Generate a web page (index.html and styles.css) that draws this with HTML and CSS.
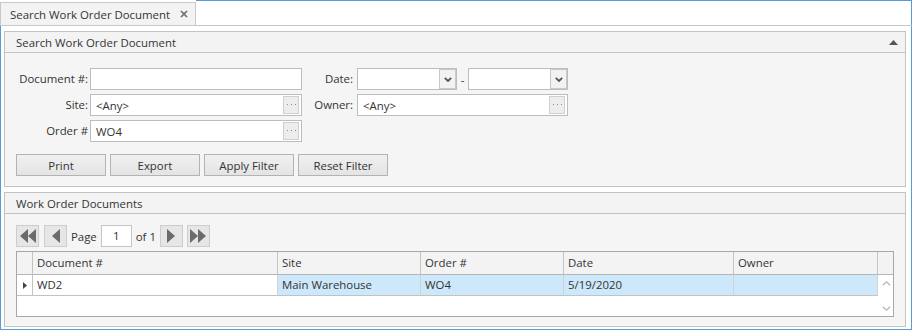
FILE: index.html
```html
<!DOCTYPE html>
<html lang="en">
<head>
  <meta charset="UTF-8">
  <title>Search Work Order Document</title>
  <link rel="stylesheet" href="styles.css">
</head>
<body>

  <div class="window">
    <div class="tabstrip">
      <div class="tab">
        <span>Search Work Order Document</span>
        <svg class="tab-close" width="8" height="8" viewBox="0 0 8 8"><path d="M1 1L7 7M7 1L1 7" stroke="#6a6a6a" stroke-width="1.6"/></svg>
      </div>
      <div class="tab-fill"></div>
    </div>

    <div class="content">

      <!-- Filter group -->
      <section class="group group-filter">
        <header class="group-head">
          <span>Search Work Order Document</span>
          <svg class="collapse" width="9" height="5" viewBox="0 0 9 5"><path d="M4.5 0L9 5H0Z" fill="#555"/></svg>
        </header>
        <div class="group-body">
          <div class="filter-grid">
            <label class="lbl">Document #:</label>
            <div class="field"></div>
            <label class="lbl lbl-right">Date:</label>
            <div class="date-range">
              <div class="field combo">
                <span class="combo-btn"><svg width="8" height="5" viewBox="0 0 8 5"><path d="M0.8 0.8L4 4L7.2 0.8" stroke="#555" stroke-width="1.8" fill="none"/></svg></span>
              </div>
              <span class="dash">-</span>
              <div class="field combo">
                <span class="combo-btn"><svg width="8" height="5" viewBox="0 0 8 5"><path d="M0.8 0.8L4 4L7.2 0.8" stroke="#555" stroke-width="1.8" fill="none"/></svg></span>
              </div>
            </div>

            <label class="lbl">Site:</label>
            <div class="field">
              <span class="field-text">&lt;Any&gt;</span>
              <span class="dots-btn"><svg width="9" height="2" viewBox="0 0 9 2"><path d="M0 0h1v1H0zM4 0h1v1H4zM8 0h1v1H8z" fill="#8a8a8a"/></svg></span>
            </div>
            <label class="lbl lbl-right">Owner:</label>
            <div class="field">
              <span class="field-text">&lt;Any&gt;</span>
              <span class="dots-btn"><svg width="9" height="2" viewBox="0 0 9 2"><path d="M0 0h1v1H0zM4 0h1v1H4zM8 0h1v1H8z" fill="#8a8a8a"/></svg></span>
            </div>

            <label class="lbl">Order #</label>
            <div class="field">
              <span class="field-text">WO4</span>
              <span class="dots-btn"><svg width="9" height="2" viewBox="0 0 9 2"><path d="M0 0h1v1H0zM4 0h1v1H4zM8 0h1v1H8z" fill="#8a8a8a"/></svg></span>
            </div>
          </div>

          <div class="actions">
            <button class="btn">Print</button>
            <button class="btn">Export</button>
            <button class="btn">Apply Filter</button>
            <button class="btn">Reset Filter</button>
          </div>
        </div>
      </section>

      <!-- Results group -->
      <section class="group group-results">
        <header class="group-head">
          <span>Work Order Documents</span>
        </header>
        <div class="group-body">
          <div class="pager">
            <span class="pg-btn"><svg width="16" height="14" viewBox="0 0 16 14"><path d="M8 0V14L0 7ZM16 0V14L8 7Z" fill="#6b6b6b"/></svg></span>
            <span class="pg-btn"><svg width="8" height="14" viewBox="0 0 8 14"><path d="M8 0V14L0 7Z" fill="#6b6b6b"/></svg></span>
            <span class="pg-text">Page</span>
            <span class="pg-input">1</span>
            <span class="pg-text">of 1</span>
            <span class="pg-btn"><svg width="8" height="14" viewBox="0 0 8 14"><path d="M0 0V14L8 7Z" fill="#6b6b6b"/></svg></span>
            <span class="pg-btn"><svg width="16" height="14" viewBox="0 0 16 14"><path d="M0 0V14L8 7ZM8 0V14L16 7Z" fill="#6b6b6b"/></svg></span>
          </div>

          <div class="grid">
            <div class="gh"></div>
            <div class="gh">Document #</div>
            <div class="gh">Site</div>
            <div class="gh">Order #</div>
            <div class="gh">Date</div>
            <div class="gh">Owner</div>
            <div class="gh gh-last"></div>

            <div class="gc indicator"><svg width="4" height="7" viewBox="0 0 4 7"><path d="M0 0L4 3.5L0 7Z" fill="#444"/></svg></div>
            <div class="gc focused">WD2</div>
            <div class="gc sel">Main Warehouse</div>
            <div class="gc sel">WO4</div>
            <div class="gc sel">5/19/2020</div>
            <div class="gc sel"></div>
            <div class="vscroll">
              <svg width="9" height="5" viewBox="0 0 9 5"><path d="M0.8 4.2L4.5 0.8L8.2 4.2" stroke="#b8b8b8" stroke-width="1.3" fill="none"/></svg>
              <svg width="9" height="5" viewBox="0 0 9 5"><path d="M0.8 0.8L4.5 4.2L8.2 0.8" stroke="#b8b8b8" stroke-width="1.3" fill="none"/></svg>
            </div>
            <div class="gempty"></div>
          </div>
        </div>
      </section>

    </div>
  </div>

</body>
</html>
```

FILE: styles.css
```css
* {
  box-sizing: border-box;
}

body {
  margin: 0;
  font-family: "Segoe UI", "Open Sans", "Noto Sans", sans-serif;
  font-size: 11.4px;
  color: #333;
  background: #fff;
  white-space: nowrap;
}

.window {
  width: 912px;
  height: 330px;
}

/* tab strip */
.tabstrip {
  display: flex;
  height: 26px;
  border-bottom: 1px solid #c6c6c6;
}

.tab {
  margin-top: 2px;
  width: 196px;
  height: 23px;
  display: flex;
  align-items: center;
  padding-left: 9px;
  background: #f3f3f3;
  border: 1px solid #c8c8c8;
  border-bottom: none;
  color: #333;
}

.tab-close {
  margin-left: 10px;
}

.tab-fill {
  flex: 1;
  border-top: 1px solid #5b9bd5;
  border-right: 1px solid #5b9bd5;
}

.content {
  height: 304px;
  border: 1px solid #5b9bd5;
  border-top: none;
  padding: 5px 5px 2px 3px;
  display: flex;
  flex-direction: column;
  gap: 5px;
  background: #fff;
}

/* group boxes */
.group {
  border: 1px solid #c3c3c3;
  background: #f5f5f5;
}

.group-filter {
  height: 156px;
}

.group-results {
  height: 135px;
}

.group-head {
  height: 21px;
  display: flex;
  align-items: center;
  justify-content: space-between;
  padding: 0 7px 0 11px;
  background: #f3f3f3;
  border-bottom: 1px solid #c3c3c3;
  color: #333;
}

.group-filter .group-body {
  padding: 15px 0 0 11px;
}

.group-results .group-body {
  padding: 11px 0 0 11px;
}

.filter-grid {
  display: grid;
  grid-template-columns: 74px 212px 55px 211px;
  grid-auto-rows: 22px;
  row-gap: 4px;
}

.lbl {
  text-align: right;
  padding-right: 2px;
  line-height: 21px;
  color: #333;
}

.lbl-right {
  padding-right: 4px;
}

.field {
  position: relative;
  height: 22px;
  background: #fff;
  border: 1px solid #bdbdbd;
  display: flex;
  align-items: center;
}

.field-text {
  padding-left: 5px;
  color: #333;
}

.dots-btn {
  position: absolute;
  right: 2px;
  top: 1px;
  width: 16px;
  height: 18px;
  background: #ededed;
  border: 1px solid #cfcfcf;
  display: flex;
  align-items: center;
  justify-content: center;
}

.date-range {
  display: flex;
  align-items: center;
}

.combo {
  width: 100px;
}

.combo-btn {
  position: absolute;
  right: 0;
  top: 0;
  width: 17px;
  height: 20px;
  background: #f2f2f2;
  border: 1px solid #c9c9c9;
  display: flex;
  align-items: center;
  justify-content: center;
}

.dash {
  width: 11px;
  text-align: center;
}

.actions {
  display: flex;
  gap: 4px;
  margin-top: 12px;
}

.btn {
  width: 90px;
  height: 22px;
  padding: 0;
  font: inherit;
  color: #333;
  background: linear-gradient(#f0f0f0, #e4e4e4);
  border: 1px solid #b3b3b3;
}

/* pager */
.pager {
  display: flex;
  align-items: center;
  height: 22px;
}

.pg-btn {
  width: 23px;
  height: 22px;
  margin-right: 5px;
  background: #e6e6e6;
  border: 1px solid #cdcdcd;
  display: flex;
  align-items: center;
  justify-content: center;
}

.pg-btn:nth-child(4n+2) {
  margin-right: 4px;
}

.pg-text {
  margin-right: 4px;
}

.pg-input {
  width: 31px;
  height: 22px;
  margin-right: 4px;
  background: #fff;
  border: 1px solid #c6c6c6;
  text-align: center;
  line-height: 20px;
}

/* data grid */
.grid {
  margin-top: 4px;
  width: 878px;
  display: grid;
  grid-template-columns: 16px 245px 143px 143px 170px 144px 15px;
  grid-template-rows: 23px 21px 20px;
  border: 1px solid #a8a8a8;
  background: #fff;
}

.gh {
  background: #f3f3f3;
  border-right: 1px solid #c3c3c3;
  border-bottom: 1px solid #b5b5b5;
  padding-left: 4px;
  line-height: 22px;
}

.gh-last {
  border-right: none;
}

.gc {
  border-right: 1px solid #d2d2d2;
  border-bottom: 1px solid #c3c3c3;
  padding-left: 4px;
  line-height: 20px;
}

.indicator {
  display: flex;
  align-items: center;
  padding-left: 6px;
  border-right-color: #c3c3c3;
}

.sel {
  background: #cde8fa;
}

.vscroll {
  grid-column: 7;
  grid-row: 2 / 4;
  display: flex;
  flex-direction: column;
  align-items: center;
  justify-content: space-between;
  padding: 6px 0 5px 1px;
}

.gempty {
  grid-column: 1 / 7;
}
```
